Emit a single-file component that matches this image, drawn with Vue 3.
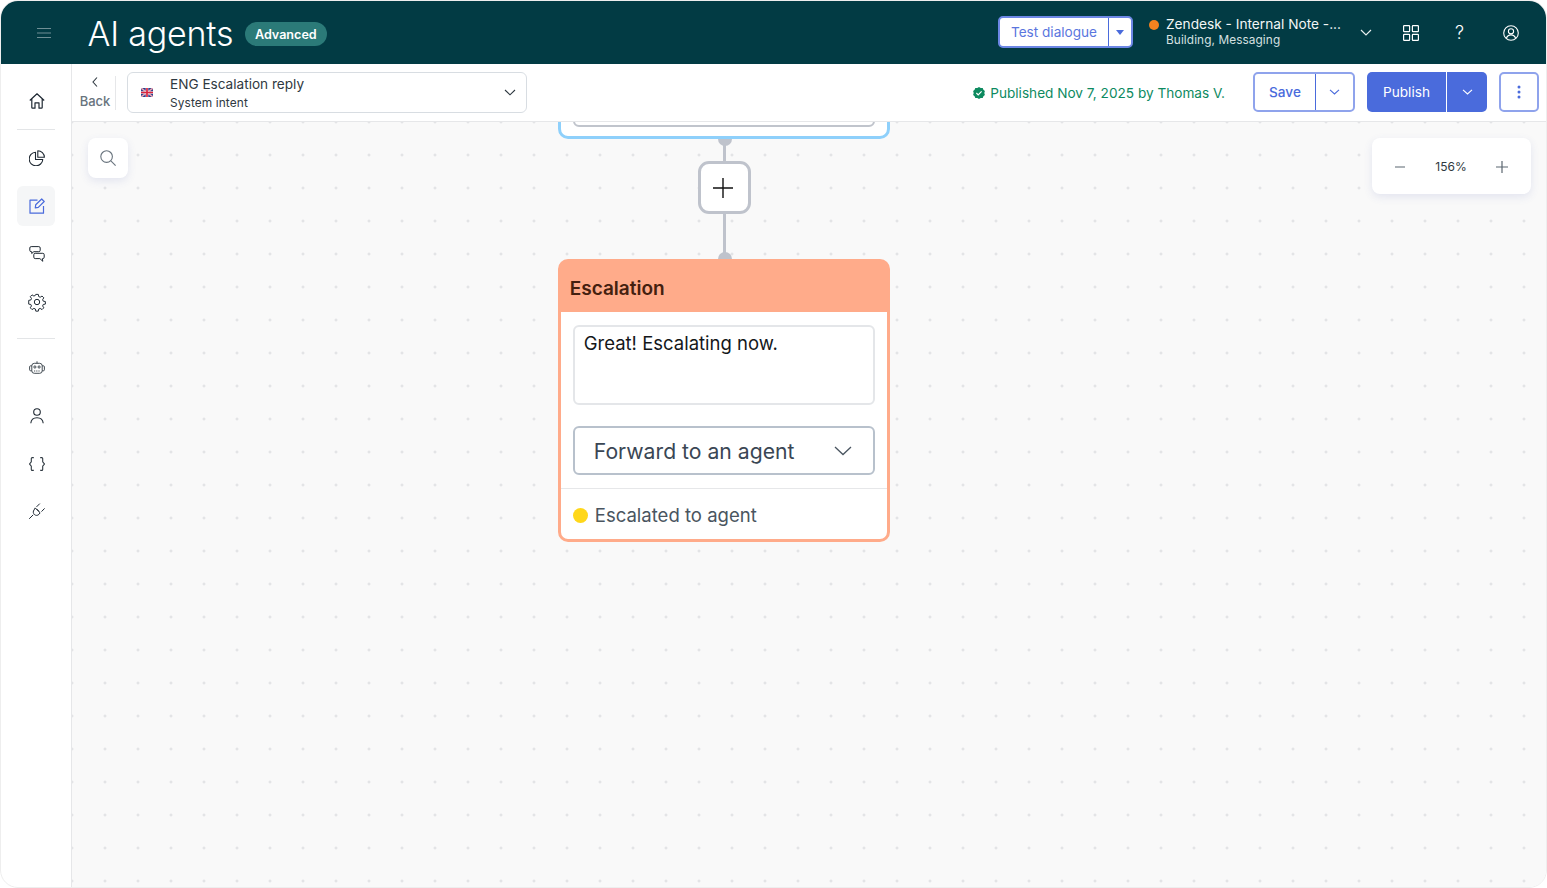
<script setup>
const zoomLevel = '156%'
</script>

<template>
  <div class="app">
    <header class="topbar">
      <button class="burger" aria-label="Menu">
        <svg width="14" height="10" viewBox="0 0 14 10"><path d="M0 .5h14M0 5h14M0 9.500h14" stroke="#6f8f95" fill="none"/></svg>
      </button>
      <h1 class="title">AI agents</h1>
      <span class="badge">Advanced</span>
      <div class="spacer"></div>
      <div class="test-btn">
        <span class="test-label">Test dialogue</span>
        <span class="test-caret"><svg width="8" height="5" viewBox="0 0 8 5"><path d="M0 0h8L4 5z" fill="#4a6bdc"/></svg></span>
      </div>
      <span class="status-dot"></span>
      <div class="channel">
        <div class="channel-name">Zendesk - Internal Note -...</div>
        <div class="channel-sub">Building, Messaging</div>
      </div>
      <svg class="channel-chev" width="12" height="7" viewBox="0 0 12 7"><path d="M1 1l5 5 5-5" stroke="#e6eeee" stroke-width="1.200" fill="none"/></svg>
      <svg class="grid-ic" width="16" height="16" viewBox="0 0 16 16" fill="none" stroke="#fff" stroke-width="1.200"><rect x=".6" y=".6" width="6" height="6" rx=".6"/><rect x="9.400" y=".6" width="6" height="6" rx=".6"/><rect x=".6" y="9.400" width="6" height="6" rx=".6"/><rect x="9.400" y="9.400" width="6" height="6" rx=".6"/></svg>
      <span class="help">?</span>
      <svg class="user-ic" width="16" height="16" viewBox="0 0 16 16" fill="none" stroke="#fff" stroke-width="1.100"><circle cx="8" cy="8" r="7.300"/><circle cx="8" cy="6.300" r="2.600"/><path d="M3.400 13.200c.8-2.200 2.500-3.300 4.600-3.300s3.800 1.100 4.600 3.300"/></svg>
    </header>

    <div class="body">
      <nav class="sidebar">
        <div class="nav-item">
          <svg width="16" height="16" viewBox="0 0 16 16" fill="none" stroke="#1f2933" stroke-width="1.200" stroke-linejoin="round"><path d="M.8 7.500L8 .8l7.200 6.700M2.800 6v8.400a.8.800 0 0 0 .8.800h2.400V9.800h4v5.400h2.400a.8.800 0 0 0 .8-.8V6"/></svg>
        </div>
        <div class="nav-rule"></div>
        <div class="nav-item">
          <svg width="16" height="16" viewBox="0 0 16 16" fill="none" stroke="#1f2933" stroke-width="1.100" stroke-linejoin="round"><path d="M6.500 2.200A6.800 6.800 0 1 0 13.800 9.500H6.500z"/><path d="M8.800.7A6.700 6.700 0 0 1 15.400 7.200H8.800z"/></svg>
        </div>
        <div class="nav-item active">
          <svg width="16" height="16" viewBox="0 0 16 16" fill="none" stroke="#4a6bdc" stroke-width="1.200" stroke-linejoin="round"><path d="M8.500 2.200H1v13h13.500V8"/><path d="M6.300 9.800l.4-3 6-5.800 2.500 2.500-5.900 5.900z"/></svg>
        </div>
        <div class="nav-item">
          <svg width="16" height="16" viewBox="0 0 16 16" fill="none" stroke="#1f2933" stroke-width="1" stroke-linejoin="round"><path d="M2.200.6h7.600c.9 0 1.400.5 1.400 1.400v2.300c0 .9-.5 1.400-1.400 1.400H4.800L2.700 7.500l.1-1.800h-.6C1.300 5.700.8 5.200.8 4.300V2C.8 1.100 1.300.6 2.200.6z"/><path d="M6.200 7.300h7.600c.9 0 1.400.5 1.400 1.400v2.500c0 .9-.5 1.400-1.400 1.400h-.5l.5 2.700-2.900-2.700H6.200c-.9 0-1.400-.5-1.400-1.400V8.700c0-.9.500-1.400 1.400-1.400z" fill="#fff"/></svg>
        </div>
        <div class="nav-item">
          <svg class="gear" width="16" height="16" viewBox="0 0 16 16" fill="none" stroke="#1f2933" stroke-width="1" stroke-linejoin="round"><path d="M6.700.4h2.600l.4 2.200 1.500.7 1.900-1.200 1.800 1.800-1.200 1.900.6 1.500 2.200.4v2.600l-2.200.4-.6 1.500 1.200 1.900-1.800 1.800-1.900-1.200-1.500.6-.4 2.200H6.700l-.4-2.200-1.500-.6-1.900 1.200-1.800-1.800 1.200-1.900-.6-1.500-2.200-.4V6.500l2.200-.4.6-1.500-1.200-1.900 1.800-1.800 1.900 1.200 1.500-.7z" transform="translate(.2 0) scale(.98)"/><circle cx="8" cy="8" r="2.700"/></svg>
        </div>
        <div class="nav-rule second"></div>
        <div class="nav-item">
          <svg width="16" height="13" viewBox="0 0 16 13" fill="none" stroke="#2f3941" stroke-width=".9"><rect x="2.800" y="2.300" width="10.400" height="10" rx="2.500"/><path d="M8 .3v2M2.800 4.800H1.600c-.6 0-1 .4-1 1v3c0 .6.400 1 1 1h1.200M13.200 4.800h1.200c.6 0 1 .4 1 1v3c0 .6-.4 1-1 1h-1.200"/><circle cx="5.900" cy="6" r="1.100"/><circle cx="10.100" cy="6" r="1.100"/><path d="M5 10h6" stroke-dasharray="1 .8"/></svg>
        </div>
        <div class="nav-item">
          <svg class="nudge" width="14" height="16" viewBox="0 0 14 16" fill="none" stroke="#1f2933" stroke-width="1.100"><circle cx="7" cy="4" r="3.300"/><path d="M.8 15.200c.3-3.600 2.800-5.500 6.200-5.500s5.900 1.900 6.200 5.500"/></svg>
        </div>
        <div class="nav-item">
          <svg class="nudge" width="16" height="14" viewBox="0 0 16 14" fill="none" stroke="#2f3941" stroke-width="1.100"><path d="M4.800.6H3.200c-.6 0-.9.400-.9 1v3.300L.6 7l1.700 2.100v3.300c0 .6.300 1 .9 1h1.600M11.200.6h1.600c.6 0 .9.400.9 1v3.300L15.400 7l-1.700 2.100v3.300c0 .6-.3 1-.9 1h-1.600"/></svg>
        </div>
        <div class="nav-item">
          <svg width="16" height="16" viewBox="0 0 16 16" fill="none" stroke="#1f2933" stroke-width="1" stroke-linejoin="round"><path d="M.2 15.800l4-4M10.800.6L7.500 3.900M15.600 5.400l-3.100 3.200"/><path d="M6.200 4.900l4.900 4.900-1.200 1.600c-1.300 1.300-3.200 1.300-4.500.1-1.400-1.300-1.500-3.200-.3-4.600z"/><path d="M7.600 5.900l2.500 2.500"/></svg>
        </div>
      </nav>

      <main class="main">
        <div class="toolbar">
          <div class="back">
            <svg width="6" height="10" viewBox="0 0 6 10"><path d="M5 .5L1 5l4 4.500" stroke="#2f3941" stroke-width="1.100" fill="none"/></svg>
            <span>Back</span>
          </div>
          <div class="tb-rule"></div>
          <div class="intent">
            <svg class="flag" width="12" height="9" viewBox="0 0 12 9">
              <rect width="12" height="9" rx="1" fill="#27408f"/>
              <path d="M0 0l12 9M12 0L0 9" stroke="#e9a3b2" stroke-width="1.500"/>
              <path d="M6 0v9M0 4.500h12" stroke="#f4e9ec" stroke-width="2.600"/>
              <path d="M6 0v9M0 4.500h12" stroke="#d9243f" stroke-width="1.700"/>
            </svg>
            <div class="intent-text">
              <div class="intent-name">ENG Escalation reply</div>
              <div class="intent-sub">System intent</div>
            </div>
            <svg class="intent-chev" width="12" height="7" viewBox="0 0 12 7"><path d="M1 1l5 4.800L11 1" stroke="#2f3941" stroke-width="1.100" fill="none"/></svg>
          </div>
          <div class="spacer"></div>
          <svg class="pub-ic" width="12" height="12" viewBox="0 0 12 12"><path d="M6 0l1.700 1 2-.1.700 1.800 1.500 1.300-.6 2 .6 2-1.500 1.300-.7 1.800-2-.1L6 12l-1.700-1-2 .1-.7-1.800L.1 8l.6-2-.6-2 1.500-1.300.7-1.800 2 .1z" fill="#0d8a5f"/><path d="M3.400 6l1.800 1.800 3.400-3.400" stroke="#fff" stroke-width="1.200" fill="none"/></svg>
          <span class="published">Published Nov 7, 2025 by Thomas V.</span>
          <div class="split save">
            <span class="split-main">Save</span>
            <span class="split-arrow"><svg width="11" height="6" viewBox="0 0 11 6"><path d="M1 .8l4.500 4.200L10 .8" stroke="#4a6bdc" stroke-width="1.100" fill="none"/></svg></span>
          </div>
          <div class="split publish">
            <span class="split-main">Publish</span>
            <span class="split-arrow"><svg width="11" height="6" viewBox="0 0 11 6"><path d="M1 .8l4.500 4.200L10 .8" stroke="#fff" stroke-width="1.100" fill="none"/></svg></span>
          </div>
          <div class="more">
            <svg width="4" height="14" viewBox="0 0 4 14" fill="#4a6bdc"><circle cx="2" cy="2" r="1.500"/><circle cx="2" cy="7" r="1.500"/><circle cx="2" cy="12" r="1.500"/></svg>
          </div>
        </div>

        <div class="canvas">
          <div class="tool search">
            <svg width="16" height="16" viewBox="0 0 16 16" fill="none" stroke="#68737d" stroke-width="1.100"><circle cx="6.600" cy="6.600" r="5.800"/><path d="M10.900 10.900l4.700 4.700"/></svg>
          </div>
          <div class="tool zoom">
            <svg width="10" height="2" viewBox="0 0 10 2"><path d="M0 1h10" stroke="#5b6670" stroke-width="1.200"/></svg>
            <span class="zoom-val">{{ zoomLevel }}</span>
            <svg width="12" height="12" viewBox="0 0 12 12"><path d="M0 6h12M6 0v12" stroke="#5b6670" stroke-width="1.200"/></svg>
          </div>

          <div class="link"></div>
          <span class="handle h-top"></span>
          <span class="handle h-bottom"></span>
          <div class="node-prev"><div class="node-prev-input"></div></div>
          <div class="add">
            <svg width="20" height="20" viewBox="0 0 20 20"><path d="M0 10h20M10 0v20" stroke="#111" stroke-width="1.400"/></svg>
          </div>

          <section class="node">
            <div class="node-head">Escalation</div>
            <div class="node-body">
              <div class="message">Great! Escalating now.</div>
              <div class="select">
                <span>Forward to an agent</span>
                <svg width="18" height="10" viewBox="0 0 18 10"><path d="M1 1l8 7.500L17 1" stroke="#4a5560" stroke-width="1.300" fill="none"/></svg>
              </div>
            </div>
            <div class="node-foot">
              <span class="foot-dot"></span>
              <span>Escalated to agent</span>
            </div>
          </section>
        </div>
      </main>
    </div>
  </div>
</template>

<style>
html, body { margin: 0; background: #fff; }
</style>

<style scoped>
* { box-sizing: border-box; }
.app {
  width: 1547px;
  height: 888px;
  display: flex;
  flex-direction: column;
  border: 1px solid #eeeeee;
  border-radius: 18px;
  overflow: hidden;
  font-family: Inter, "Liberation Sans", sans-serif;
  background: #fff;
}
.spacer { flex: 1; }

.topbar {
  height: 63px;
  flex: none;
  background: #023b44;
  display: flex;
  align-items: center;
  color: #fff;
  padding-right: 27px;
}
.burger {
  margin-left: 36px;
  width: 14px;
  padding: 0;
  border: 0;
  background: none;
  display: flex;
}
.title {
  margin: 2px 0 0 36.500px;
  font-size: 34px;
  font-weight: 300;
  letter-spacing: -0.2px;
  line-height: 40px;
  color: #fff;
}
.badge {
  margin: 2px 0 0 11.500px;
  height: 24px;
  width: 82px;
  border-radius: 12px;
  background: #2b7a78;
  font-size: 12.600px;
  font-weight: 600;
  line-height: 25px;
  text-align: center;
}
.test-btn {
  width: 135px;
  height: 32px;
  margin-top: -1px;
  background: #fff;
  border: 2px solid #6d87e5;
  border-radius: 5px;
  display: flex;
  align-items: center;
}
.test-label {
  flex: 1;
  text-align: center;
  color: #5a76de;
  font-size: 13.600px;
  border-right: 1px solid #4a6bdc;
  line-height: 28px;
}
.test-caret {
  width: 22px;
  display: flex;
  justify-content: center;
}
.status-dot {
  width: 10px;
  height: 10px;
  border-radius: 50%;
  background: #f5821f;
  margin: -16px 7px 0 16px;
}
.channel { width: 186px; margin-top: -2px; }
.channel-name { font-size: 13.700px; line-height: 17px; color: #f2f6f6; white-space: nowrap; }
.channel-sub { font-size: 11.800px; line-height: 15px; letter-spacing: .1px; color: #d5e0e1; }
.channel-chev { margin-left: 8px; }
.grid-ic { margin-left: 31px; }
.help { margin-left: 36px; width: 9px; font-size: 18px; font-weight: 300; color: #fff; }
.user-ic { margin-left: 39px; }

.body { flex: 1; display: flex; min-height: 0; }
.sidebar {
  width: 71px;
  flex: none;
  border-right: 1px solid #e6e7e9;
  padding: 17px 16px 0;
  display: flex;
  flex-direction: column;
  gap: 8px;
}
.nav-item {
  height: 40px;
  border-radius: 6px;
  display: flex;
  align-items: center;
  justify-content: center;
  width: 38px;
  padding-left: 2px;
  flex: none;
}
.nav-item.active { background: #f5f6f7; }
.nudge { margin-top: 2px; }
.gear { overflow: visible; }
.nav-rule { height: 1px; background: #e3e5e7; flex: none; }
.nav-rule.second { margin-top: 8px; }

.main { flex: 1; display: flex; flex-direction: column; min-width: 0; }
.toolbar {
  height: 58px;
  flex: none;
  background: #fff;
  border-bottom: 1px solid #e6e7e9;
  display: flex;
  align-items: center;
  padding: 0 7px;
}
.back {
  width: 32px;
  display: flex;
  flex-direction: column;
  align-items: center;
  gap: 5px;
  font-size: 13px;
  font-weight: 500;
  line-height: 16px;
  color: #68737d;
}
.back span { margin-top: 1px; }
.tb-rule { width: 1px; height: 34px; background: #e6e7e9; margin: 0 11px 0 4px; }
.intent {
  width: 400px;
  height: 41px;
  border: 1px solid #d8dde2;
  border-radius: 6px;
  display: flex;
  align-items: center;
  padding: 0 10px 0 13px;
}
.intent-text { flex: 1; margin: -1px 0 0 17px; }
.intent-name { font-size: 13.600px; line-height: 20px; color: #2f3941; }
.intent-sub { font-size: 11.900px; line-height: 17px; color: #2f3941; letter-spacing: .1px; }
.pub-ic { flex: none; margin-left: -1px; }
.published {
  margin: 0 28px 0 5px;
  font-size: 13.620px;
  color: #0d8a5f;
  white-space: nowrap;
}
.split {
  display: flex;
  height: 40px;
  margin-top: -1px;
  border-radius: 5px;
  font-size: 13.600px;
  font-weight: 500;
}
.split-main, .split-arrow { display: flex; align-items: center; justify-content: center; }
.save { width: 102px; border: 2px solid #8fa3ec; color: #4a6bdc; }
.save .split-main { width: 61px; border-right: 1px solid #4a6bdc; }
.save .split-arrow { flex: 1; }
.publish { width: 120px; margin-left: 12px; background: #4a6bdc; color: #fff; }
.publish .split-main { width: 80px; border-right: 1px solid #fff; font-weight: 400; }
.publish .split-arrow { flex: 1; }
.more {
  width: 40px;
  height: 40px;
  margin: -1px 0 0 12px;
  border: 2px solid #8fa3ec;
  border-radius: 5px;
  display: flex;
  align-items: center;
  justify-content: center;
}

.canvas {
  flex: 1;
  position: relative;
  overflow: hidden;
  background-color: #f9f9f9;
  background-image: radial-gradient(circle at center, #dcdde0 1.100px, transparent 1.400px);
  background-size: 33px 33px;
  background-position: -16.500px 16.500px;
}
.tool {
  position: absolute;
  background: #fff;
  border-radius: 8px;
  box-shadow: 0 3px 8px rgba(80, 90, 180, .13);
  display: flex;
  align-items: center;
}
.search { left: 16px; top: 16px; width: 40px; height: 40px; justify-content: center; }
.zoom { left: 1300px; top: 16px; width: 159px; height: 56px; padding: 2px 23px 0; justify-content: space-between; }
.zoom-val { font-size: 12px; color: #2f3941; margin: -2px 0 0 1px; }

.node-prev {
  position: absolute;
  left: 485.750px;
  top: -40px;
  width: 332.500px;
  height: 57px;
  border: 3px solid #8ed0fb;
  border-radius: 10px;
  background: #fff;
  padding: 0 12px;
}
.node-prev-input {
  height: 42px;
  border: 2px solid #c0c4cc;
  border-radius: 6px;
  background: #fff;
}
.link {
  position: absolute;
  left: 651px;
  top: 12px;
  width: 3px;
  height: 128px;
  background: #bfc3cc;
}
.handle {
  position: absolute;
  width: 14px;
  height: 14px;
  border-radius: 50%;
  background: #bfc3cc;
}
.h-top { left: 645.500px; top: 10px; }
.h-bottom { left: 645.500px; top: 130px; }
.add {
  position: absolute;
  left: 626px;
  top: 39px;
  width: 53px;
  height: 53px;
  background: #fff;
  border: 3px solid #bfc3cc;
  border-radius: 11px;
  display: flex;
  align-items: center;
  justify-content: center;
  padding-right: 3px;
}
.node {
  position: absolute;
  left: 485.750px;
  top: 137px;
  width: 332.500px;
  height: 283px;
  background: #fff;
  border: 3px solid #ffab8a;
  border-radius: 10px;
  display: flex;
  flex-direction: column;
}
.node-head {
  height: 50px;
  flex: none;
  background: #ffab8a;
  padding: 5px 0 0 9px;
  font-size: 19px;
  font-weight: 600;
  line-height: 44px;
  color: #44200f;
}
.node-body { padding: 13px 12px 0; flex: none; }
.message {
  height: 80px;
  border: 2px solid #e4e6e9;
  border-radius: 6px;
  padding: 4px 9px;
  font-size: 18.500px;
  line-height: 24px;
  color: #14171a;
}
.select {
  height: 49px;
  margin-top: 21px;
  border: 2px solid #b8c1cc;
  border-radius: 6px;
  padding: 0 21px 0 19px;
  display: flex;
  align-items: center;
  justify-content: space-between;
  font-size: 21.200px;
  color: #3a4654;
}
.node-foot {
  margin-top: 13px;
  flex: 1;
  border-top: 1px solid #e6e7e9;
  padding: 2px 12px 0;
  display: flex;
  align-items: center;
  gap: 7px;
  font-size: 18.550px;
  color: #4a5560;
}
.foot-dot { width: 15px; height: 15px; border-radius: 50%; background: #ffd71a; flex: none; }
</style>
